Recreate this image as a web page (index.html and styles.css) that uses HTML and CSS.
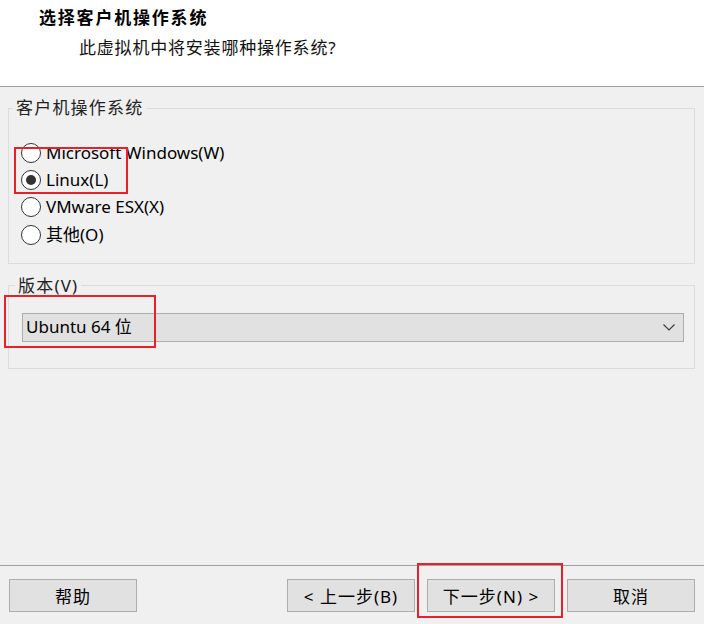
FILE: index.html
```html
<!DOCTYPE html>
<html lang="zh-CN">
<head>
<meta charset="utf-8">
<link rel="stylesheet" href="styles.css">
</head>
<body>
<div class="wizard">
  <header class="head">
    <div class="title">选择客户机操作系统</div>
    <div class="subtitle">此虚拟机中将安装哪种操作系统?</div>
  </header>
  <main class="body">
    <fieldset class="group os-group">
      <legend class="legend">客户机操作系统</legend>
      <div class="radio-row"><span class="radio"></span><span class="rlabel">Microsoft Windows(W)</span></div>
      <div class="radio-row"><span class="radio checked"></span><span class="rlabel">Linux(L)</span></div>
      <div class="radio-row"><span class="radio"></span><span class="rlabel">VMware ESX(X)</span></div>
      <div class="radio-row"><span class="radio"></span><span class="rlabel">其他(O)</span></div>
    </fieldset>
    <fieldset class="group ver-group">
      <legend class="legend">版本(V)</legend>
      <div class="select">
        <span class="select-text">Ubuntu 64 位</span>
        <svg class="chev" width="12" height="7" viewBox="0 0 12 7"><polyline points="0.5,0.5 6,6 11.5,0.5" fill="none" stroke="#3c3c3c" stroke-width="1.2"/></svg>
      </div>
    </fieldset>
  </main>
  <footer class="foot">
    <button class="btn">帮助</button>
    <div class="nav">
      <button class="btn">&lt; 上一步(B)</button>
      <button class="btn">下一步(N) &gt;</button>
      <button class="btn">取消</button>
    </div>
  </footer>
  <div class="mark mark1"></div>
  <div class="mark mark2"></div>
  <div class="mark mark3"></div>
</div>
</body>
</html>
```
FILE: styles.css
```css
* { box-sizing: border-box; }
html, body { margin: 0; padding: 0; }
body {
  background: #f0f0f0;
  font-family: "Noto Sans", "Noto Sans CJK SC", sans-serif;
  color: #000;
}
.wizard {
  position: relative;
  width: 704px;
  height: 624px;
  display: flex;
  flex-direction: column;
  overflow: hidden;
}
.head {
  height: 87px;
  background: #fff;
  border-bottom: 1px solid #a0a0a0;
  padding: 6px 0 0 39px;
}
.title {
  font-size: 17px;
  font-weight: bold;
  line-height: 24px;
  letter-spacing: 1.8px;
}
.subtitle {
  font-size: 17px;
  line-height: 24px;
  margin: 6px 0 0 40px;
  letter-spacing: 0.8px;
  color: #111;
}
.body {
  flex: 1;
  padding-top: 11px;
}
.group {
  margin: 0 9px 0 8px;
  border: 1px solid #dcdcdc;
  padding: 0;
}
.legend {
  font-size: 17px;
  line-height: 20px;
  padding: 0 3px;
  letter-spacing: 1.2px;
  color: #222;
}
.os-group {
  padding: 21px 12px 14px 12px;
}
.os-group .legend { margin-left: -8px; }
.radio-row {
  height: 27.4px;
  display: flex;
  align-items: center;
  gap: 5px;
}
.radio {
  width: 20px;
  height: 20px;
  border-radius: 50%;
  border: 1px solid #333;
  background: #fff;
  display: flex;
  align-items: center;
  justify-content: center;
}
.radio.checked::after {
  content: "";
  width: 10px;
  height: 10px;
  border-radius: 50%;
  background: #333;
}
.rlabel {
  font-size: 17px;
  line-height: 20px;
}
.ver-group {
  margin-top: 12px;
  padding: 17px 10px 26px 13px;
}
.ver-group .legend { margin-left: -7px; }
.select {
  height: 29px;
  background: #e1e1e1;
  border: 1px solid #adadad;
  display: flex;
  align-items: center;
  justify-content: space-between;
  padding: 0 8px 0 3px;
}
.select-text {
  font-size: 17px;
  line-height: 20px;
}
.foot {
  height: 59px;
  border-top: 1px solid #a0a0a0;
  padding: 13px 9px 0 9px;
  display: flex;
  justify-content: space-between;
  align-items: flex-start;
}
.nav {
  display: flex;
  gap: 12px;
}
.btn {
  width: 128px;
  height: 33px;
  background: #e1e1e1;
  border: 1px solid #adadad;
  font-family: "Noto Sans", "Noto Sans CJK SC", sans-serif;
  font-size: 17px;
  letter-spacing: 1px;
  color: #000;
  padding: 0;
  margin: 0;
}
.mark {
  position: absolute;
  border: 2px solid #e8202a;
}
.mark1 { left: 14px; top: 147px; width: 114px; height: 47px; }
.mark2 { left: 4px; top: 295px; width: 152px; height: 53px; }
.mark3 { left: 417px; top: 563px; width: 146px; height: 55px; }
```
